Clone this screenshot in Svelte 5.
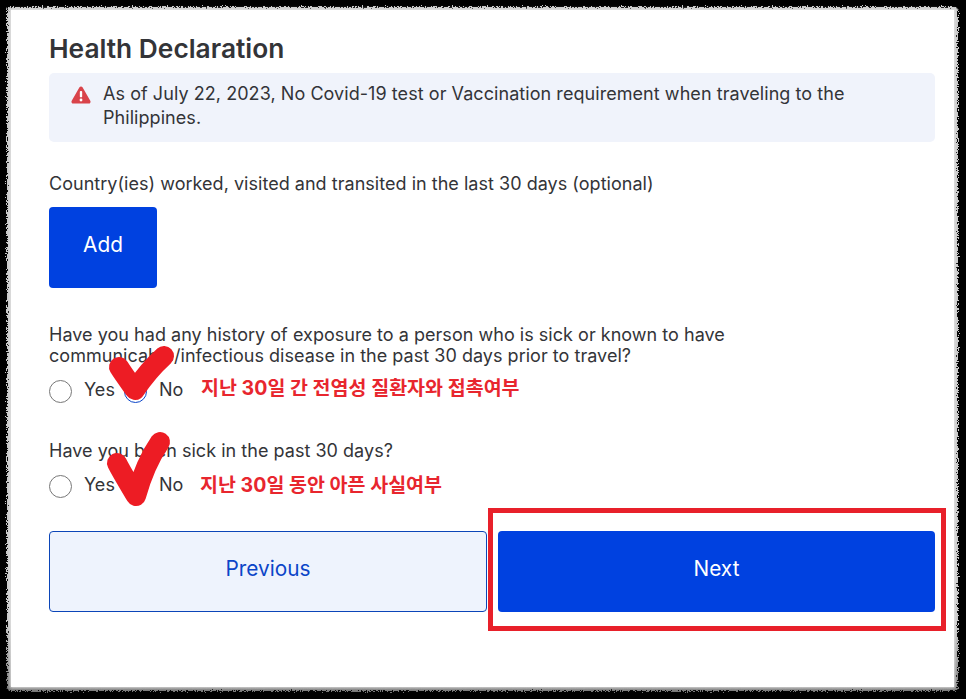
<script>
  let q1 = $state('no');
  let q2 = $state('no');
</script>

<div class="page">
  <svg class="edge" width="966" height="699" aria-hidden="true">
    <defs>
      <linearGradient id="shade" x1="0" y1="0" x2="0" y2="1">
        <stop offset="0.9" stop-color="#c8c8c8" />
        <stop offset="1" stop-color="#777" />
      </linearGradient>
      <filter id="rough" x="-2%" y="-2%" width="104%" height="104%">
        <feTurbulence type="fractalNoise" baseFrequency="0.8" numOctaves="2" seed="4" />
        <feDisplacementMap in="SourceGraphic" scale="7" />
        <feGaussianBlur stdDeviation="0.5" />
      </filter>
    </defs>
    <rect x="7" y="7" width="951" height="684" rx="4" fill="url(#shade)" filter="url(#rough)" />
  </svg>

  <main class="card">
    <h1>Health Declaration</h1>

    <div class="alert">
      <svg class="warn" width="20" height="18" viewBox="0 0 22 20" aria-hidden="true">
        <path d="M9.3 1.4a2 2 0 0 1 3.4 0l8.6 15.1a2 2 0 0 1-1.7 3H2.4a2 2 0 0 1-1.7-3z" fill="#d9434a" />
        <rect x="9.7" y="5.6" width="2.6" height="7" rx="1" fill="#fff" />
        <circle cx="11" cy="15.6" r="1.6" fill="#fff" />
      </svg>
      <p>As of July 22, 2023, No Covid-19 test or Vaccination requirement when traveling to the Philippines.</p>
    </div>

    <div class="countries">
      <p>Country(ies) worked, visited and transited in the last 30 days (optional)</p>
      <button class="add">Add</button>
    </div>

    <fieldset class="exposure">
      <legend>Have you had any history of exposure to a person who is sick or known to have communicable/infectious disease in the past 30 days prior to travel?</legend>
      <div class="options">
        <label><input type="radio" name="q1" value="yes" bind:group={q1} />Yes</label>
        <label><input type="radio" name="q1" value="no" bind:group={q1} />No</label>
        <span class="note">지난 30일 간 전염성 질환자와 접촉여부</span>
      </div>
    </fieldset>

    <fieldset class="sick">
      <legend>Have you been sick in the past 30 days?</legend>
      <div class="options">
        <label><input type="radio" name="q2" value="yes" bind:group={q2} />Yes</label>
        <label><input type="radio" name="q2" value="no" bind:group={q2} />No</label>
        <span class="note">지난 30일 동안 아픈 사실여부</span>
      </div>
    </fieldset>

    <div class="actions">
      <button class="previous">Previous</button>
      <div class="next-wrap">
        <button class="next">Next</button>
      </div>
    </div>
  </main>

  <svg class="checks" width="966" height="699" aria-hidden="true">
    <path d="M119 367 C124 375 130 383 135 390 C143 378 153 366 164 356" />
    <path d="M117 463 C122 473 129 484 136 496 C141 478 149 458 160 442" />
  </svg>
</div>

<style>
  :global(body) {
    background: #000;
  }
  .page {
    position: relative;
    width: 966px;
    height: 699px;
    padding: 10px 12px 12px 11px;
    box-sizing: border-box;
    overflow: hidden;
    background: #000;
    font-family: Inter, "Noto Sans CJK KR", sans-serif;
    color: #333438;
  }
  .edge {
    position: absolute;
    left: 0;
    top: 0;
  }
  .checks {
    position: absolute;
    left: 0;
    top: 0;
    pointer-events: none;
  }
  .checks path {
    fill: none;
    stroke: #ed1c24;
    stroke-width: 20px;
    stroke-linecap: round;
    stroke-linejoin: round;
  }
  .card {
    position: relative;
    height: 100%;
    box-sizing: border-box;
    padding: 24px 19px 0 38px;
    background: #fff;
    box-shadow: 0 0 3px 1px #e4e4e4;
  }
  h1 {
    margin: 0;
    font-size: 26.3px;
    line-height: 30px;
    font-weight: 600;
  }
  p {
    margin: 0;
  }
  .alert {
    display: flex;
    gap: 12px;
    margin-top: 9px;
    height: 69px;
    box-sizing: border-box;
    padding: 9px 20px 0 22px;
    background: #f0f3fb;
    border-radius: 5px;
    font-size: 18px;
    line-height: 24px;
    letter-spacing: 0.06px;
  }
  .warn {
    flex: none;
    margin-top: 4px;
  }
  .countries {
    margin-top: 30px;
    font-size: 18px;
    line-height: 24px;
    letter-spacing: 0.03px;
  }
  button {
    padding: 0 0 7px;
    font-family: inherit;
    font-size: 20.8px;
    font-weight: 400;
    border-radius: 4px;
    cursor: pointer;
  }
  .add {
    display: block;
    width: 108px;
    height: 81px;
    margin-top: 11px;
    border: none;
    background: #0041e0;
    color: #fff;
  }
  fieldset {
    margin: 0;
    padding: 0;
    border: none;
    font-size: 18px;
    line-height: 21px;
    letter-spacing: 0.03px;
  }
  legend {
    padding: 0;
    width: 720px;
  }
  .exposure {
    margin-top: 36px;
  }
  .sick {
    margin-top: 38px;
  }
  .options {
    display: flex;
    align-items: center;
    height: 24px;
    margin-top: 12px;
    line-height: 24px;
  }
  label {
    display: flex;
    align-items: center;
    gap: 12px;
    width: 75px;
  }
  label + label {
    width: 76px;
  }
  input {
    appearance: none;
    flex: none;
    width: 23px;
    height: 23px;
    margin: 2px 0 0;
    border: 1.5px solid #777;
    border-radius: 50%;
    background: #fff;
  }
  input:checked {
    border-color: #0b45c8;
  }
  .note {
    font-size: 19.5px;
    font-weight: 700;
    color: #e8262e;
    white-space: nowrap;
    margin: -4px 0 0 1px;
  }
  .sick .note {
    margin: 0;
  }
  .actions {
    display: flex;
    gap: 11px;
    margin-top: 34px;
  }
  .actions button {
    display: block;
    width: 100%;
    height: 81px;
  }
  .actions > button {
    flex: 0 0 438px;
  }
  .previous {
    border: 1px solid #0b45b8;
    background: #eef3fd;
    color: #0b45c8;
  }
  .next-wrap {
    position: relative;
    flex: 1;
  }
  .next-wrap::after {
    content: "";
    position: absolute;
    inset: -23px -11px -19px -10px;
    border: 5px solid #e8202a;
    pointer-events: none;
  }
  .next {
    border: none;
    background: #0041e0;
    color: #fff;
  }
</style>
